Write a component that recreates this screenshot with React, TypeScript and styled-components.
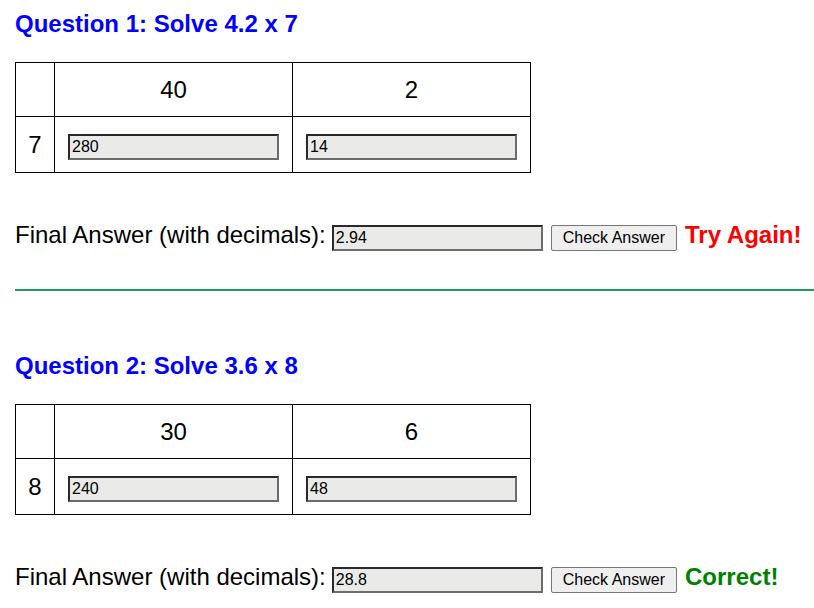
import React, { FC, useState } from 'react';
import styled, { createGlobalStyle } from 'styled-components';

const GlobalStyle = createGlobalStyle`
  body {
    margin: 0;
    background: #fff;
    font-family: "Liberation Sans", Arial, sans-serif;
    color: #000;
  }
`;

type QuestionData = {
  a: string;
  b: number;
  parts: number[];
  cells: string[];
  answer: string;
  product: number;
};

const data: QuestionData[] = [
  { a: '4.2', b: 7, parts: [40, 2], cells: ['280', '14'], answer: '2.94', product: 29.4 },
  { a: '3.6', b: 8, parts: [30, 6], cells: ['240', '48'], answer: '28.8', product: 28.8 },
];

const Page = styled.div`
  padding: 10px 0 0 15px;
`;

const Question = styled.section``;

const Heading = styled.h2`
  margin: 0;
  font-size: 24px;
  line-height: 28px;
  font-weight: bold;
  color: #0000ff;
`;

const Grid = styled.table`
  margin-top: 24px;
  border-collapse: collapse;
  table-layout: fixed;
  font-size: 24px;
`;

const Col = styled.col<{ $w: number }>`
  width: ${(p) => p.$w}px;
`;

const Cell = styled.td<{ $h: number }>`
  border: 1px solid #000;
  height: ${(p) => p.$h}px;
  padding: 0;
  text-align: center;
  vertical-align: middle;
`;

const InputCell = styled(Cell)`
  padding-top: 2px;
`;

const TextBox = styled.input`
  box-sizing: border-box;
  width: 211px;
  height: 26px;
  margin: 0;
  padding: 0 2px;
  border: 2px solid;
  border-color: #2a2a2a #6c6c6c #6c6c6c #2a2a2a;
  background: #eaebe8;
  font-family: "Liberation Sans", Arial, sans-serif;
  font-size: 16px;
  color: #000;
  vertical-align: middle;
  outline: none;
`;

const AnswerRow = styled.div`
  display: flex;
  align-items: baseline;
  margin-top: 48px;
  font-size: 24px;
`;

const Label = styled.span``;

const AnswerBox = styled(TextBox)`
  margin-left: 6px;
  vertical-align: baseline;
`;

const CheckButton = styled.button`
  box-sizing: border-box;
  height: 26px;
  margin-left: 8px;
  padding: 0 11px;
  border: 1px solid #767676;
  border-radius: 2px;
  background: #efefef;
  font-family: "Liberation Sans", Arial, sans-serif;
  font-size: 16px;
  color: #000;
  cursor: pointer;
`;

const Feedback = styled.span<{ $ok: boolean }>`
  margin-left: 8px;
  font-weight: bold;
  color: ${(p) => (p.$ok ? '#008000' : '#ff0000')};
`;

const Divider = styled.hr`
  margin: 38px 0 61px;
  border: 0;
  height: 2px;
  background: #1f9c5a;
`;

const QuestionBlock: FC<{ q: QuestionData; n: number }> = ({ q, n }) => {
  const [cells, setCells] = useState(q.cells);
  const [answer, setAnswer] = useState(q.answer);
  const check = () => Math.abs(parseFloat(answer) - q.product) < 1e-9;
  const [ok, setOk] = useState<boolean>(check());

  return (
    <Question>
      <Heading>
        Question {n}: Solve {q.a} x {q.b}
      </Heading>
      <Grid>
        <colgroup>
          <Col $w={39} />
          <Col $w={238} />
          <Col $w={238} />
        </colgroup>
        <tbody>
          <tr>
            <Cell $h={53} />
            {q.parts.map((p) => (
              <Cell key={p} $h={53}>{p}</Cell>
            ))}
          </tr>
          <tr>
            <Cell $h={55}>{q.b}</Cell>
            {cells.map((c, i) => (
              <InputCell key={i} $h={53}>
                <TextBox
                  value={c}
                  onChange={(e) => setCells(cells.map((v, j) => (j === i ? e.target.value : v)))}
                />
              </InputCell>
            ))}
          </tr>
        </tbody>
      </Grid>
      <AnswerRow>
        <Label>Final Answer (with decimals):</Label>
        <AnswerBox value={answer} onChange={(e) => setAnswer(e.target.value)} />
        <CheckButton onClick={() => setOk(check())}>Check Answer</CheckButton>
        <Feedback $ok={ok}>{ok ? 'Correct!' : 'Try Again!'}</Feedback>
      </AnswerRow>
    </Question>
  );
};

const App: FC = () => (
  <>
    <GlobalStyle />
    <Page>
      {data.map((q, i) => (
        <React.Fragment key={q.a}>
          <QuestionBlock q={q} n={i + 1} />
          {i + 1 !== data.length ? <Divider /> : null}
        </React.Fragment>
      ))}
    </Page>
  </>
);

export default App;
